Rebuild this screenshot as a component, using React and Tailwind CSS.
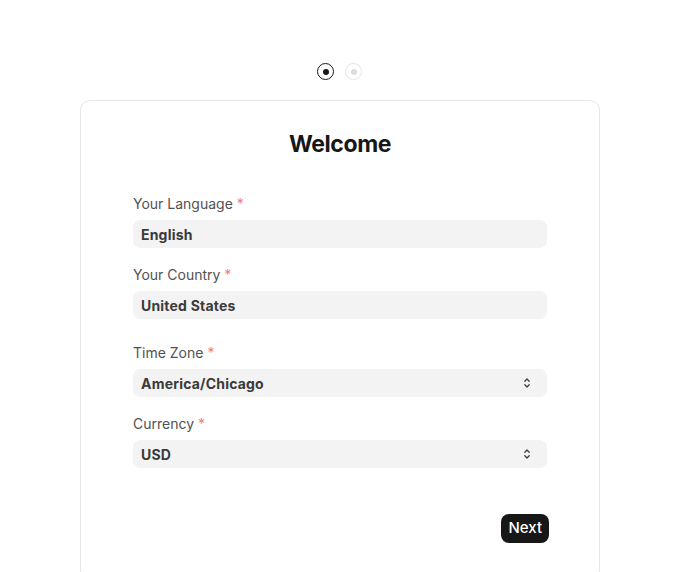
import React, { useState } from "react";

function UpDown() {
  return (
    <svg width="14" height="14" viewBox="0 0 16 16" fill="none" stroke="#404040" strokeWidth="1.5" strokeLinecap="round" strokeLinejoin="round">
      <path d="M5.5 6l2.5-2.5 2.5 2.5" />
      <path d="M5.5 10l2.5 2.5 2.5-2.5" />
    </svg>
  );
}

function Label({ children }) {
  return (
    <label className="block text-[14px] leading-5 text-[#525252] mb-1.5">
      {children} <span className="text-[#ef7b7b]">*</span>
    </label>
  );
}

function Field({ value, select }) {
  return (
    <div className="h-[28px] w-full rounded-[7px] bg-[#f3f3f3] flex items-center justify-between pl-2 pr-[13px]">
      <span className="text-[14px] font-bold tracking-[0.2px] text-[#3a3a3a]">{value}</span>
      {select && <UpDown />}
    </div>
  );
}

export default function App() {
  const [step] = useState(0);

  return (
    <div className="min-h-screen bg-white font-['Inter',sans-serif] overflow-hidden">
      <div className="flex gap-[11px] pt-[63px] pl-[317px]">
        <div className={`w-[17px] h-[17px] rounded-full border-[1.5px] flex items-center justify-center ${step === 0 ? "border-[#171717]" : "border-[#e2e2e2]"}`}>
          <div className="w-[6px] h-[6px] rounded-full bg-[#171717]" />
        </div>
        <div className="w-[17px] h-[17px] rounded-full border-[1.5px] border-[#e5e5e5] flex items-center justify-center">
          <div className="w-[6px] h-[6px] rounded-full bg-[#dcdcdc]" />
        </div>
      </div>

      <div className="mt-[20px] w-[520px] h-[480px] rounded-[10px] border border-[#e6e6e6] ml-[80px] px-[52px] pt-[27px]">
        <h1 className="text-center text-[23px] leading-8 font-bold text-[#171717] tracking-[-0.4px]">
          Welcome
        </h1>

        <div className="mt-[34px]">
          <Label>Your Language</Label>
          <Field value="English" />
        </div>
        <div className="mt-[17px]">
          <Label>Your Country</Label>
          <Field value="United States" />
        </div>
        <div className="mt-[24px]">
          <Label>Time Zone</Label>
          <Field value="America/Chicago" select />
        </div>
        <div className="mt-[17px]">
          <Label>Currency</Label>
          <Field value="USD" select />
        </div>

        <div className="flex justify-end mt-[46px] -mr-[2px]">
          <button className="h-[29px] px-[7px] rounded-[8px] bg-[#171717] text-white text-[15px] font-medium">
            Next
          </button>
        </div>
      </div>
    </div>
  );
}
